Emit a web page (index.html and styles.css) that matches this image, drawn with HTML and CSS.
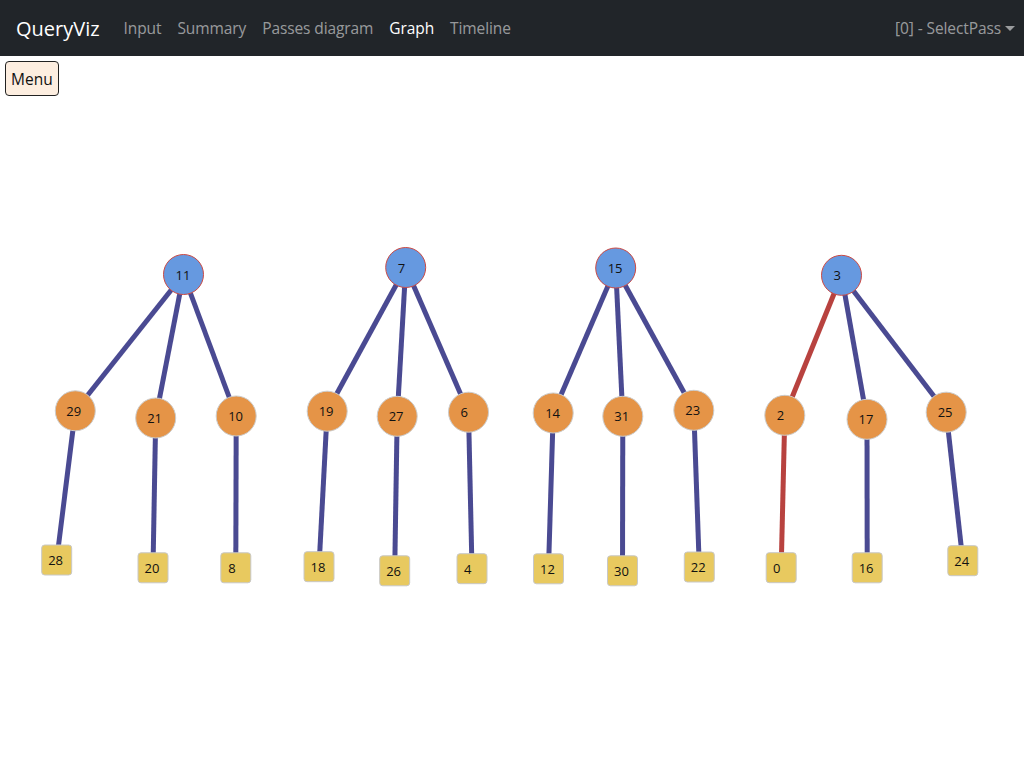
FILE: index.html
```html
<!DOCTYPE html>
<html>
<head>
<meta charset="utf-8">
<title>QueryViz</title>
<link rel="stylesheet" href="styles.css">
</head>
<body>
<nav class="navbar">
  <a class="brand">QueryViz</a>
  <ul class="nav">
    <li><a class="nav-link">Input</a></li>
    <li><a class="nav-link">Summary</a></li>
    <li><a class="nav-link">Passes diagram</a></li>
    <li><a class="nav-link active">Graph</a></li>
    <li><a class="nav-link">Timeline</a></li>
  </ul>
  <a class="nav-link dropdown">[0] - SelectPass<span class="caret"></span></a>
</nav>
<div class="toolbar">
  <button class="menu-btn">Menu</button>
</div>
<svg class="graph" width="1024" height="668" viewBox="0 100 1024 668">
  <g class="edges">
    <line x1="183.5" y1="274.5" x2="75.3" y2="410.8"/>
    <line x1="183.5" y1="274.5" x2="155.7" y2="418"/>
    <line x1="183.5" y1="274.5" x2="236.2" y2="416"/>
    <line x1="75.3" y1="410.8" x2="56.7" y2="560"/>
    <line x1="155.7" y1="418" x2="153" y2="567.8"/>
    <line x1="236.2" y1="416" x2="235.8" y2="567.8"/>

    <line x1="405.7" y1="267.5" x2="327.2" y2="411.2"/>
    <line x1="405.7" y1="267.5" x2="397.2" y2="416.3"/>
    <line x1="405.7" y1="267.5" x2="468.5" y2="412.2"/>
    <line x1="327.2" y1="411.2" x2="319" y2="566.7"/>
    <line x1="397.2" y1="416.3" x2="394.7" y2="570.8"/>
    <line x1="468.5" y1="412.2" x2="472" y2="568.7"/>

    <line x1="615.7" y1="268" x2="553.2" y2="413"/>
    <line x1="615.7" y1="268" x2="622.8" y2="416.3"/>
    <line x1="615.7" y1="268" x2="693.8" y2="410.3"/>
    <line x1="553.2" y1="413" x2="548.5" y2="568.8"/>
    <line x1="622.8" y1="416.3" x2="622.5" y2="570.8"/>
    <line x1="693.8" y1="410.3" x2="699.3" y2="567"/>

    <line class="hl" x1="841.5" y1="275.3" x2="784.8" y2="415.3"/>
    <line x1="841.5" y1="275.3" x2="867" y2="419.3"/>
    <line x1="841.5" y1="275.3" x2="946.2" y2="412.2"/>
    <line class="hl" x1="784.8" y1="415.3" x2="781.2" y2="567.7"/>
    <line x1="867" y1="419.3" x2="867.2" y2="567.8"/>
    <line x1="946.2" y1="412.2" x2="962.8" y2="560.7"/>
  </g>
  <g class="roots">
    <circle cx="183.5" cy="274.5" r="20"/>
    <circle cx="405.7" cy="267.5" r="20"/>
    <circle cx="615.7" cy="268" r="20"/>
    <circle cx="841.5" cy="275.3" r="20"/>
  </g>
  <g class="mids">
    <circle cx="75.3" cy="410.8" r="20"/>
    <circle cx="155.7" cy="418" r="20"/>
    <circle cx="236.2" cy="416" r="20"/>
    <circle cx="327.2" cy="411.2" r="20"/>
    <circle cx="397.2" cy="416.3" r="20"/>
    <circle cx="468.5" cy="412.2" r="20"/>
    <circle cx="553.2" cy="413" r="20"/>
    <circle cx="622.8" cy="416.3" r="20"/>
    <circle cx="693.8" cy="410.3" r="20"/>
    <circle cx="784.8" cy="415.3" r="20"/>
    <circle cx="867" cy="419.3" r="20"/>
    <circle cx="946.2" cy="412.2" r="20"/>
  </g>
  <g class="leaves">
    <rect x="41.7" y="545" width="30" height="30" rx="3"/>
    <rect x="138" y="552.8" width="30" height="30" rx="3"/>
    <rect x="220.8" y="552.8" width="30" height="30" rx="3"/>
    <rect x="304" y="551.7" width="30" height="30" rx="3"/>
    <rect x="379.7" y="555.8" width="30" height="30" rx="3"/>
    <rect x="457" y="553.7" width="30" height="30" rx="3"/>
    <rect x="533.5" y="553.8" width="30" height="30" rx="3"/>
    <rect x="607.5" y="555.8" width="30" height="30" rx="3"/>
    <rect x="684.3" y="552" width="30" height="30" rx="3"/>
    <rect x="766.2" y="552.7" width="30" height="30" rx="3"/>
    <rect x="852.2" y="552.8" width="30" height="30" rx="3"/>
    <rect x="947.8" y="545.7" width="30" height="30" rx="3"/>
  </g>
  <g class="labels">
    <text x="175.5" y="279.5">11</text>
    <text x="397.7" y="272.5">7</text>
    <text x="607.7" y="273">15</text>
    <text x="833.5" y="280.3">3</text>

    <text x="66.3" y="415.8">29</text>
    <text x="147.2" y="423">21</text>
    <text x="228.2" y="421">10</text>
    <text x="318.7" y="416.2">19</text>
    <text x="388.7" y="421.3">27</text>
    <text x="460.5" y="417.2">6</text>
    <text x="545.2" y="418">14</text>
    <text x="614.3" y="421.3">31</text>
    <text x="685.3" y="415.3">23</text>
    <text x="776.8" y="420.3">2</text>
    <text x="858.5" y="424.3">17</text>
    <text x="937.7" y="417.2">25</text>

    <text x="48.2" y="565">28</text>
    <text x="144.5" y="572.8">20</text>
    <text x="228.3" y="572.8">8</text>
    <text x="310.5" y="571.7">18</text>
    <text x="386.2" y="575.8">26</text>
    <text x="464" y="573.7">4</text>
    <text x="540" y="573.8">12</text>
    <text x="614" y="575.8">30</text>
    <text x="690.8" y="572">22</text>
    <text x="773" y="572.7">0</text>
    <text x="858.7" y="572.8">16</text>
    <text x="954.3" y="565.7">24</text>
  </g>
</svg>
</body>
</html>
```
FILE: styles.css
```css
html, body {
  margin: 0;
  padding: 0;
  background: #ffffff;
  overflow: hidden;
}

body {
  font-family: "Open Sans", "Noto Sans", sans-serif;
}

.navbar {
  display: flex;
  align-items: center;
  height: 56px;
  padding: 0 8px 0 16px;
  background: #212529;
  box-sizing: border-box;
}

.brand {
  font-size: 20px;
  color: #ffffff;
  margin-right: 16px;
}

.nav {
  display: flex;
  list-style: none;
  margin: 0;
  padding: 0;
  flex: 1;
}

.nav-link {
  display: block;
  padding: 8px;
  font-size: 15.5px;
  letter-spacing: -0.1px;
  color: rgba(255, 255, 255, 0.55);
}

.nav-link.active {
  color: #ffffff;
}

.dropdown {
  display: flex;
  align-items: center;
  padding-right: 1px;
}

.caret {
  display: inline-block;
  margin-left: 4px;
  width: 0;
  height: 0;
  border-top: 5px solid rgba(255, 255, 255, 0.55);
  border-left: 5px solid transparent;
  border-right: 5px solid transparent;
}

.toolbar {
  padding: 5px 5px 4px;
  height: 35px;
}

.menu-btn {
  height: 35px;
  padding: 0 5px;
  font-family: "Open Sans", "Noto Sans", sans-serif;
  font-size: 15.5px;
  color: #111;
  background: #fdeee0;
  border: 1px solid #222;
  border-radius: 4px;
}

.graph {
  display: block;
}

.edges line {
  stroke: #4a4a92;
  stroke-width: 5;
}

.edges line.hl {
  stroke: #b8423f;
}

.roots circle {
  fill: #6699e0;
  stroke: #cc4a44;
  stroke-width: 1;
}

.mids circle {
  fill: #e59447;
  stroke: #cccccc;
  stroke-width: 1;
}

.leaves rect {
  fill: #e8c95f;
  stroke: #c8c8c8;
  stroke-width: 1;
}

.labels text {
  font-family: "Open Sans", "Noto Sans", sans-serif;
  font-size: 13px;
  fill: #111;
}
```
